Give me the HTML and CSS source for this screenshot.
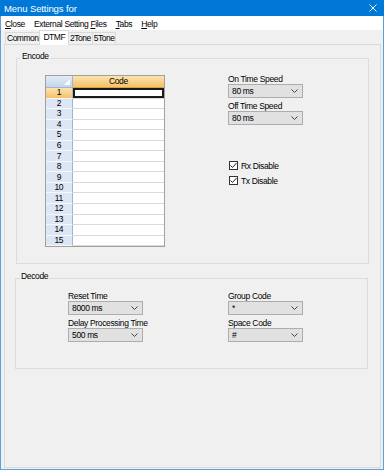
FILE: index.html
```html
<!DOCTYPE html>
<html lang="en">
<head>
  <meta charset="UTF-8">
  <title>Menu Settings for</title>
  <link rel="stylesheet" href="styles.css">
</head>
<body>
  <div class="window">
    <div class="titlebar">
      <span>Menu Settings for</span>
      <svg class="close" width="8" height="8" viewBox="0 0 8 8"><path d="M0.5 0.5L7.5 7.5M7.5 0.5L0.5 7.5" stroke="#fff" stroke-width="1"/></svg>
    </div>
    <div class="menubar">
      <span><u>C</u>lose</span>
      <span>External Setting <u>F</u>iles</span>
      <span><u>T</u>abs</span>
      <span><u>H</u>elp</span>
    </div>
    <div class="tabs">
      <span class="tab">Common</span>
      <span class="tab active">DTMF</span>
      <span class="tab">2Tone</span>
      <span class="tab">5Tone</span>
    </div>
    <div class="page">
      <div class="group encode">
        <span class="legend">Encode</span>
        <table class="grid">
          <thead>
            <tr><th class="corner"></th><th class="col">Code</th></tr>
          </thead>
          <tbody>
            <tr class="current"><th>1</th><td></td></tr>
            <tr><th>2</th><td></td></tr>
            <tr><th>3</th><td></td></tr>
            <tr><th>4</th><td></td></tr>
            <tr><th>5</th><td></td></tr>
            <tr><th>6</th><td></td></tr>
            <tr><th>7</th><td></td></tr>
            <tr><th>8</th><td></td></tr>
            <tr><th>9</th><td></td></tr>
            <tr><th>10</th><td></td></tr>
            <tr><th>11</th><td></td></tr>
            <tr><th>12</th><td></td></tr>
            <tr><th>13</th><td></td></tr>
            <tr><th>14</th><td></td></tr>
            <tr><th>15</th><td></td></tr>
          </tbody>
        </table>
        <div class="side">
          <div class="field">
            <label>On Time Speed</label>
            <div class="select"><span>80 ms</span><svg width="7" height="4" viewBox="0 0 7 4"><path d="M0.5 0.5L3.5 3.5L6.5 0.5" fill="none" stroke="#444"/></svg></div>
          </div>
          <div class="field">
            <label>Off Time Speed</label>
            <div class="select"><span>80 ms</span><svg width="7" height="4" viewBox="0 0 7 4"><path d="M0.5 0.5L3.5 3.5L6.5 0.5" fill="none" stroke="#444"/></svg></div>
          </div>
          <div class="check first">
            <span class="box"><svg width="7" height="7" viewBox="0 0 7 7"><path d="M0.5 3.5L2.5 5.5L6.5 1" fill="none" stroke="#222" stroke-width="1"/></svg></span>
            <span>Rx Disable</span>
          </div>
          <div class="check">
            <span class="box"><svg width="7" height="7" viewBox="0 0 7 7"><path d="M0.5 3.5L2.5 5.5L6.5 1" fill="none" stroke="#222" stroke-width="1"/></svg></span>
            <span>Tx Disable</span>
          </div>
        </div>
      </div>

      <div class="group decode">
        <span class="legend">Decode</span>
        <div class="col">
          <div class="field">
            <label>Reset Time</label>
            <div class="select"><span>8000 ms</span><svg width="7" height="4" viewBox="0 0 7 4"><path d="M0.5 0.5L3.5 3.5L6.5 0.5" fill="none" stroke="#444"/></svg></div>
          </div>
          <div class="field">
            <label>Delay Processing Time</label>
            <div class="select"><span>500 ms</span><svg width="7" height="4" viewBox="0 0 7 4"><path d="M0.5 0.5L3.5 3.5L6.5 0.5" fill="none" stroke="#444"/></svg></div>
          </div>
        </div>
        <div class="col second">
          <div class="field">
            <label>Group Code</label>
            <div class="select"><span>*</span><svg width="7" height="4" viewBox="0 0 7 4"><path d="M0.5 0.5L3.5 3.5L6.5 0.5" fill="none" stroke="#444"/></svg></div>
          </div>
          <div class="field">
            <label>Space Code</label>
            <div class="select"><span>#</span><svg width="7" height="4" viewBox="0 0 7 4"><path d="M0.5 0.5L3.5 3.5L6.5 0.5" fill="none" stroke="#444"/></svg></div>
          </div>
        </div>
      </div>
    </div>
  </div>
</body>
</html>
```

FILE: styles.css
```css
* {
  box-sizing: border-box;
}

body {
  margin: 0;
  font-family: "Liberation Sans", Arial, sans-serif;
  font-size: 8.5px;
  letter-spacing: -0.35px;
  color: #000;
  white-space: nowrap;
}

.window {
  width: 384px;
  height: 470px;
  border: 1px solid #5d9fdc;
  border-top: 0;
  background: #f0f0f0;
  display: flex;
  flex-direction: column;
}

.titlebar {
  height: 16px;
  margin: 0 -1px;
  padding: 0 7px 0 4px;
  background: #0078d7;
  color: #fff;
  display: flex;
  align-items: center;
  justify-content: space-between;
  font-size: 9.5px;
  letter-spacing: -0.1px;
}

.menubar {
  height: 14px;
  padding: 2px 0 0 4px;
  background: #fff;
  display: flex;
  align-items: center;
  gap: 9px;
}

.tabs {
  height: 14px;
  padding-left: 4px;
  display: flex;
  align-items: flex-end;
}

.tab {
  height: 12px;
  padding: 0 1px;
  line-height: 11px;
  letter-spacing: -0.5px;
  border: 1px solid #d9d9d9;
  border-bottom: 0;
  margin-right: -1px;
  background: #f0f0f0;
}

.tab.active {
  height: 15px;
  line-height: 13px;
  margin-bottom: -1px;
  padding: 0 3px;
  background: #fff;
  position: relative;
  z-index: 1;
}

.page {
  flex: 1;
  margin: 0 2px 1px 3px;
  padding-left: 11px;
  border: 1px solid #dadada;
  background: #f0f0f0;
}

.group {
  position: relative;
  width: 353px;
  border: 1px solid #dcdcdc;
  display: flex;
  align-items: flex-start;
}

.legend {
  position: absolute;
  top: -8px;
  left: 4px;
  padding: 0 1px;
  line-height: 11px;
  background: #f0f0f0;
}

.encode {
  margin-top: 13px;
  height: 206px;
}

.decode {
  margin-top: 14px;
  margin-left: -1px;
  height: 91px;
}

/* data grid */
.grid {
  margin: 16px 0 0 28px;
  width: 120px;
  table-layout: fixed;
  border-collapse: separate;
  border-spacing: 0;
  border: 1px solid #a0a0a0;
  background: #fff;
}

.grid th {
  padding: 0;
  font-weight: normal;
  text-align: center;
}

.grid .corner {
  width: 22px;
  height: 12px;
  background: linear-gradient(#e3ecf7, #c3d5ec);
  border-right: 1px solid #9eb6ce;
  border-bottom: 1px solid #9eb6ce;
  position: relative;
}

.grid .corner::after {
  content: '';
  position: absolute;
  right: 2px;
  bottom: 2px;
  border-left: 6px solid transparent;
  border-bottom: 6px solid #fff;
}

.grid .col {
  height: 12px;
  line-height: 11px;
  background: linear-gradient(#fbe3b0, #f4c268);
  border-bottom: 1px solid #d9a23f;
}

.grid tbody th {
  height: 10.55px;
  line-height: 9px;
  background: #dce6f4;
  border-right: 1px solid #9eb6ce;
  border-bottom: 1px solid #f4f8fc;
}

.grid td {
  height: 10.55px;
  padding: 0;
  border-bottom: 1px solid #dadada;
}

.grid tr.current th {
  background: linear-gradient(#fbe3b0, #f4c268);
}

.grid tr.current td {
  box-shadow: inset 0 0 0 2px #1a1a1a;
}

/* right side controls */
.side {
  margin: 16px 0 0 63px;
  width: 75px;
}

.field label {
  display: block;
  line-height: 9px;
}

.field + .field {
  margin-top: 4px;
}

.select {
  height: 14px;
  padding: 0 4px 0 3px;
  border: 1px solid #adadad;
  background: #e1e1e1;
  display: flex;
  align-items: center;
  justify-content: space-between;
}

.check {
  height: 9px;
  margin-top: 6px;
  display: flex;
  align-items: center;
  gap: 3px;
}

.check.first {
  margin-top: 36px;
}

.box {
  width: 9px;
  height: 9px;
  margin-left: 1px;
  border: 1px solid #333;
  background: #fff;
  display: flex;
  align-items: center;
  justify-content: center;
}

.col {
  width: 75px;
  margin: 13px 0 0 52px;
}

.col.second {
  margin-left: 85px;
}
```
